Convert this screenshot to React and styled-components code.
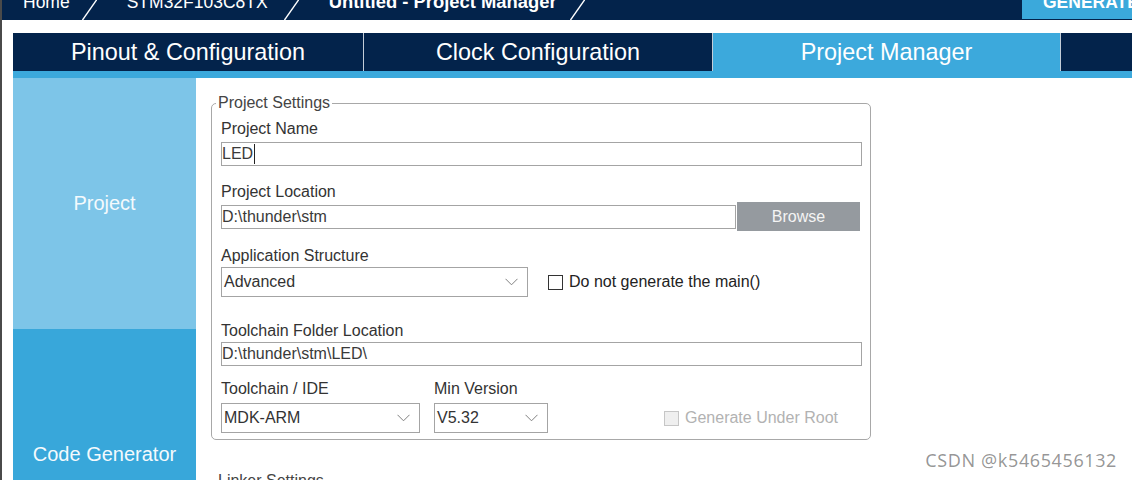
import styled, { createGlobalStyle } from 'styled-components'

const GlobalStyle = createGlobalStyle`
  html, body {
    margin: 0;
    padding: 0;
  }
  body {
    width: 1132px;
    height: 480px;
    overflow: hidden;
    background: #fff;
    font-family: "Liberation Sans", Arial, sans-serif;
  }
`

const Frame = styled.div`
  position: relative;
  width: 1132px;
  height: 480px;
  box-sizing: border-box;
  border-left: 2px solid #4a4a4a;
  overflow: hidden;
`

const TopBar = styled.div`
  display: flex;
  align-items: flex-start;
  height: 20px;
  background: #03234b;
  overflow: hidden;
`

const Crumbs = styled.div`
  display: flex;
  align-items: flex-start;
  padding-left: 21px;
`

const Crumb = styled.span`
  margin-top: -8px;
  margin-right: ${p => p.$gap || 13}px;
  color: #fff;
  font-size: ${p => (p.$bold ? '18.4px' : '17.5px')};
  font-weight: ${p => (p.$bold ? 700 : 400)};
  line-height: 20px;
  white-space: nowrap;
`

const SlashSvg = styled.svg`
  flex: none;
  margin-right: 30px;
`

const GenerateButton = styled.div`
  margin-left: auto;
  width: 110px;
  height: 19px;
  padding-left: 21px;
  box-sizing: border-box;
  background: #3ba9db;
  color: #fff;
  font-size: 17.5px;
  font-weight: 700;
  line-height: 20px;
  white-space: nowrap;
  overflow: hidden;
  span {
    display: block;
    margin-top: -8px;
  }
`

const Workspace = styled.div`
  margin: 13px 0 0 11px;
`

const TabBar = styled.div`
  display: grid;
  grid-template-columns: 350px 349px 348px 1fr;
  height: 38px;
  background: #03234b;
`

const Tab = styled.div`
  display: flex;
  align-items: center;
  justify-content: center;
  box-sizing: border-box;
  border-left: ${p => (p.$first ? 'none' : '1px solid #c3cdd8')};
  background: ${p => (p.$active ? '#3ca9dc' : '#03234b')};
  color: #fff;
  font-size: 23.4px;
  white-space: nowrap;
`

const TabStrip = styled.div`
  height: 7px;
  background: #3ca9dc;
`

const Main = styled.div`
  display: flex;
  align-items: flex-start;
`

const Sidebar = styled.div`
  display: flex;
  flex-direction: column;
  width: 183px;
  flex: none;
`

const SideItem = styled.div`
  display: flex;
  align-items: center;
  justify-content: center;
  height: 251px;
  background: ${p => p.$bg};
  color: #f4fafd;
  font-size: 20px;
`

const Content = styled.div`
  padding: 16px 0 0 15px;
`

const Fieldset = styled.fieldset`
  width: 660px;
  box-sizing: border-box;
  margin: ${p => p.$mt || 0}px 0 0;
  padding: 8px 8px 6px 9px;
  min-width: 0;
  border: 1px solid #a8a8a8;
  border-radius: 5px;
`

const Legend = styled.legend`
  margin-left: -5px;
  padding: 0 2px;
  color: #444;
  font-size: 16px;
  line-height: 18px;
`

const Label = styled.div`
  margin-top: ${p => p.$mt || 0}px;
  color: #333;
  font-size: 16px;
  line-height: 18px;
  white-space: nowrap;
`

const TextBox = styled.div`
  display: flex;
  align-items: center;
  width: ${p => (p.$w ? `${p.$w}px` : '100%')};
  height: 24px;
  margin-top: ${p => p.$mt || 0}px;
  box-sizing: border-box;
  border: 1px solid #a4a4a4;
  color: #3a3a3a;
  font-size: 16px;
  white-space: nowrap;
`

const Caret = styled.span`
  width: 1px;
  height: 20px;
  margin-left: 1px;
  background: #222;
`

const Row = styled.div`
  display: flex;
  align-items: ${p => p.$align || 'center'};
  margin-top: ${p => p.$mt || 0}px;
`

const BrowseButton = styled.div`
  display: flex;
  align-items: center;
  justify-content: center;
  width: 123px;
  height: 29px;
  margin-left: 1px;
  background: #959a9f;
  color: #f4f4f4;
  font-size: 16px;
`

const Dropdown = styled.div`
  display: flex;
  align-items: center;
  justify-content: space-between;
  width: ${p => p.$w}px;
  height: 30px;
  margin-top: ${p => p.$mt || 0}px;
  padding: 0 9px 0 2px;
  box-sizing: border-box;
  border: 1px solid #a4a4a4;
  color: #333;
  font-size: 16px;
  white-space: nowrap;
`

const Group = styled.div`
  display: flex;
  flex-direction: column;
  margin-left: ${p => p.$ml || 0}px;
`

const CheckWrap = styled.div`
  display: flex;
  align-items: center;
  height: 30px;
  margin-left: ${p => p.$ml || 0}px;
`

const CheckBox = styled.span`
  width: 15px;
  height: 15px;
  box-sizing: border-box;
  border: 1px solid ${p => (p.$disabled ? '#c6c6c6' : '#333')};
  background: ${p => (p.$disabled ? '#efefef' : '#fff')};
`

const CheckText = styled.span`
  margin-left: 6px;
  color: ${p => (p.$disabled ? '#b2b2b2' : '#222')};
  font-size: 16px;
  white-space: nowrap;
`

const Watermark = styled.div`
  position: absolute;
  top: 452px;
  right: 15px;
  color: rgba(0, 0, 0, 0.42);
  font-family: "Noto Sans", "Open Sans", sans-serif;
  font-size: 18px;
  letter-spacing: 0.6px;
  line-height: 17px;
  white-space: nowrap;
`

function Slash() {
  return (
    <SlashSvg width="15" height="20" viewBox="0 0 15 20">
      <line x1="0.5" y1="20" x2="14.5" y2="0" stroke="#fff" strokeWidth="1.4" />
    </SlashSvg>
  )
}

function Chevron() {
  return (
    <svg width="13" height="8" viewBox="0 0 13 8">
      <polyline points="0.5,0.8 6.5,6.8 12.5,0.8" fill="none" stroke="#808080" strokeWidth="1" />
    </svg>
  )
}

function Select({ value, width, mt }) {
  return (
    <Dropdown $w={width} $mt={mt}>
      <span>{value}</span>
      <Chevron />
    </Dropdown>
  )
}

function Check({ label, disabled, ml }) {
  return (
    <CheckWrap $ml={ml}>
      <CheckBox $disabled={disabled} />
      <CheckText $disabled={disabled}>{label}</CheckText>
    </CheckWrap>
  )
}

const tabs = [
  { label: 'Pinout & Configuration' },
  { label: 'Clock Configuration' },
  { label: 'Project Manager', active: true },
  { label: '' },
]

export default function App() {
  return (
    <>
      <GlobalStyle />
      <Frame>
        <TopBar>
          <Crumbs>
            <Crumb $gap={12}>Home</Crumb>
            <Slash />
            <Crumb $gap={16}>STM32F103C8TX</Crumb>
            <Slash />
            <Crumb $bold $gap={13}>Untitled - Project Manager</Crumb>
            <Slash />
          </Crumbs>
          <GenerateButton><span>GENERATE CODE</span></GenerateButton>
        </TopBar>

        <Workspace>
          <TabBar>
            {tabs.map((t, i) => (
              <Tab key={i} $first={i === 0} $active={t.active}>{t.label}</Tab>
            ))}
          </TabBar>
          <TabStrip />

          <Main>
            <Sidebar>
              <SideItem $bg="#7dc5e8">Project</SideItem>
              <SideItem $bg="#38a7da">Code Generator</SideItem>
            </Sidebar>

            <Content>
              <Fieldset>
                <Legend>Project Settings</Legend>

                <Label>Project Name</Label>
                <TextBox $mt={4}>LED<Caret /></TextBox>

                <Label $mt={17}>Project Location</Label>
                <Row $mt={1}>
                  <TextBox $w={515}>D:\thunder\stm</TextBox>
                  <BrowseButton>Browse</BrowseButton>
                </Row>

                <Label $mt={16}>Application Structure</Label>
                <Row $mt={2}>
                  <Select value="Advanced" width={307} />
                  <Check label="Do not generate the main()" ml={20} />
                </Row>

                <Label $mt={25}>Toolchain Folder Location</Label>
                <TextBox $mt={2}>D:\thunder\stm\LED\</TextBox>

                <Row $mt={14} $align="flex-end">
                  <Group>
                    <Label>Toolchain / IDE</Label>
                    <Select value="MDK-ARM" width={199} mt={5} />
                  </Group>
                  <Group $ml={14}>
                    <Label>Min Version</Label>
                    <Select value="V5.32" width={114} mt={5} />
                  </Group>
                  <Check label="Generate Under Root" disabled ml={116} />
                </Row>
              </Fieldset>

              <Fieldset $mt={32}>
                <Legend>Linker Settings</Legend>
                <Label>Minimum Heap Size</Label>
              </Fieldset>
            </Content>
          </Main>
        </Workspace>

        <Watermark>CSDN @k5465456132</Watermark>
      </Frame>
    </>
  )
}
